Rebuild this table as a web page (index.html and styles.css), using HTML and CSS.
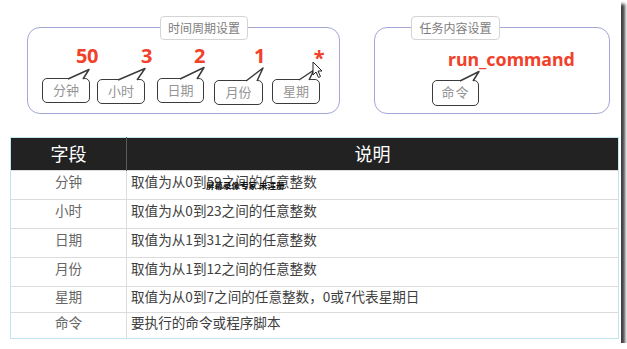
FILE: index.html
```html
<!DOCTYPE html>
<html lang="zh-CN">
<head>
<meta charset="utf-8">
<title>crontab 格式</title>
<link rel="stylesheet" href="styles.css">
</head>
<body>
<div class="shot">
  <div class="top">
    <section class="group group-time">
      <div class="legend legend-time">时间周期设置</div>
      <div class="fields">
        <div class="field f1">
          <div class="num">50</div>
          <div class="bubble">分钟<svg class="tail" width="60" height="16"><path d="M26,13 L47,3.5 L41,13"/></svg></div>
        </div>
        <div class="field f2">
          <div class="num">3</div>
          <div class="bubble">小时<svg class="tail" width="60" height="16"><path d="M21,13 L48,1.5 L40,13"/></svg></div>
        </div>
        <div class="field f3">
          <div class="num">2</div>
          <div class="bubble">日期<svg class="tail" width="60" height="16"><path d="M23,13 L47,1.5 L40,13"/></svg></div>
        </div>
        <div class="field f4">
          <div class="num">1</div>
          <div class="bubble">月份<svg class="tail" width="60" height="16"><path d="M32,13 L49,0 L43,13"/></svg></div>
        </div>
        <div class="field f5">
          <div class="num">*</div>
          <div class="bubble">星期<svg class="tail" width="60" height="16"><path d="M27,13 L42,3 L37,13"/></svg></div>
        </div>
      </div>
      <svg class="cursor" width="12" height="18" viewBox="0 0 12 18"><path d="M1,1 L1,14 L4,11 L6.5,16.5 L8.5,15.5 L6,10 L10,10 Z"/></svg>
    </section>
    <section class="group group-task">
      <div class="legend legend-task">任务内容设置</div>
      <div class="cmd">run_command</div>
      <div class="bubble bubble-cmd">命令<svg class="tail" width="60" height="16"><path d="M28,13 L47,3.5 L41,13"/></svg></div>
    </section>
  </div>
  <table class="spec">
    <thead>
      <tr class="head"><th class="col-field">字段</th><th>说明</th></tr>
    </thead>
    <tbody>
      <tr><td class="col-field">分钟</td><td>取值为从0到59之间的任意整数</td></tr>
      <tr><td class="col-field">小时</td><td>取值为从0到23之间的任意整数</td></tr>
      <tr><td class="col-field">日期</td><td>取值为从1到31之间的任意整数</td></tr>
      <tr><td class="col-field">月份</td><td>取值为从1到12之间的任意整数</td></tr>
      <tr class="short"><td class="col-field">星期</td><td>取值为从0到7之间的任意整数，0或7代表星期日</td></tr>
      <tr class="short"><td class="col-field">命令</td><td>要执行的命令或程序脚本</td></tr>
    </tbody>
  </table>
  <div class="watermark">屏幕录像专家 未注册</div>
</div>
</body>
</html>
```

FILE: styles.css
```css
html, body {
  margin: 0;
  padding: 0;
  background: #ffffff;
}

body {
  font-family: "Noto Sans CJK SC", "Noto Sans", sans-serif;
  overflow: hidden;
}

.shot {
  position: relative;
  width: 621px;
  height: 343px;
  background: #ffffff;
  box-shadow: 4px 4px 3px rgba(0, 0, 0, 0.75);
}

.top {
  display: flex;
  align-items: flex-start;
  padding-top: 27px;
}

.group {
  position: relative;
  box-sizing: border-box;
  border: 1px solid #a3a6d6;
  border-radius: 13px;
  background: #ffffff;
}

.group-time {
  margin-left: 27px;
  width: 313px;
  height: 87px;
  padding: 16px 0 0 14px;
}

.group-task {
  margin-left: 34px;
  width: 236px;
  height: 87px;
  padding: 19px 0 0 0;
}

.legend {
  position: absolute;
  top: -12px;
  box-sizing: border-box;
  height: 24px;
  border: 1px solid #d4d4d4;
  border-radius: 4px;
  background: #ffffff;
  color: #7d7d7d;
  font-size: 12px;
  line-height: 22px;
  text-align: center;
}

.legend-time {
  left: 132px;
  width: 88px;
}

.legend-task {
  left: 36px;
  width: 89px;
}

.fields {
  display: flex;
  align-items: flex-start;
}

.field {
  display: flex;
  flex-direction: column;
  width: 48px;
}

.f2 { margin-left: 7px; }
.f3 { margin-left: 12px; width: 47px; }
.f4 { margin-left: 10px; width: 49px; }
.f5 { margin-left: 9px; }

.num,
.cmd {
  font-family: "Noto Sans", "Open Sans", sans-serif;
  font-weight: bold;
  color: #f2412a;
  line-height: 24px;
}

.num {
  font-size: 20px;
  letter-spacing: -0.5px;
  text-align: right;
}

.f1 .num { margin-right: -8px; }
.f2 .num { margin-right: -7px; }
.f3 .num { margin-right: -1px; }
.f4 .num { margin-right: -2px; }
.f5 .num { margin-right: -4px; padding-top: 4px; font-size: 20px; line-height: 20px; }

.bubble {
  position: relative;
  box-sizing: border-box;
  height: 25px;
  margin-top: 10px;
  border: 1.5px solid #3b3b3b;
  border-radius: 5px;
  background: #ffffff;
  color: #959595;
  font-size: 13px;
  line-height: 21px;
  text-align: center;
}

.f2 .bubble { margin-top: 11px; }
.f4 .bubble { margin-top: 12px; }
.f5 .bubble { margin-top: 11px; }

.tail {
  position: absolute;
  top: -13px;
  left: -1.5px;
  overflow: visible;
}

.tail path {
  fill: #ffffff;
  stroke: #3b3b3b;
  stroke-width: 1.5;
  stroke-linejoin: round;
}

.cmd {
  margin-left: 73px;
  font-size: 17.8px;
}

.bubble-cmd {
  width: 47px;
  height: 26px;
  margin-top: 9px;
  margin-left: 57px;
  line-height: 22px;
  letter-spacing: 1px;
}

.cursor {
  position: absolute;
  left: 284px;
  top: 33px;
}

.cursor path {
  fill: #ffffff;
  stroke: #222222;
  stroke-width: 1;
  stroke-linejoin: round;
}

.spec {
  margin: 23px 0 0 10px;
  width: 609px;
  border-collapse: collapse;
  border: 1px solid #bfe5ee;
  table-layout: fixed;
  font-size: 13.6px;
}

.spec .col-field {
  width: 115px;
}

.spec tr.head {
  height: 33px;
}

.spec th {
  padding: 0 0 3px;
  background: #222222;
  color: #ffffff;
  font-size: 18px;
  font-weight: normal;
  vertical-align: middle;
  line-height: 22px;
}

.spec th.col-field {
  border-right: 1px solid #5a5a5a;
}

.spec tbody tr {
  height: 29px;
}

.spec tbody tr.short {
  height: 26px;
}

.spec td {
  padding: 1px 4px 0;
  border-top: 1px solid #dcdcdc;
  vertical-align: top;
  line-height: 18px;
  color: #3e3e3e;
  white-space: nowrap;
}

.spec tr.short td {
  padding-top: 0;
}

.spec td.col-field {
  border-right: 1px solid #dcdcdc;
  text-align: center;
  color: #666666;
}

.watermark {
  position: absolute;
  left: 206px;
  top: 180px;
  font-size: 8.5px;
  line-height: 10px;
  font-weight: bold;
  color: #111111;
  white-space: nowrap;
}
```
